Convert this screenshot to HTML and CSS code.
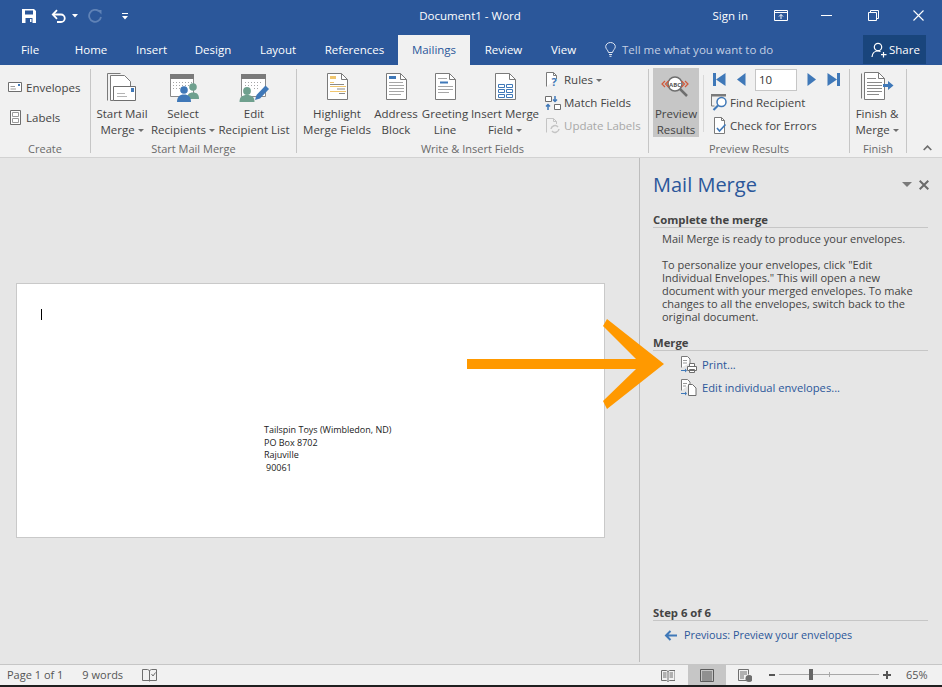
FILE: index.html
```html
<!DOCTYPE html>
<html lang="en">
<head>
<meta charset="utf-8">
<title>Document1 - Word</title>
<link rel="stylesheet" href="styles.css">
</head>
<body>
<div class="app">
  <header class="titlebar">
    <div class="qat">
      <svg class="q-save" width="16" height="16" viewBox="0 0 16 16"><path fill="#fff" d="M1 1h12l2 2v12H1z"/><path fill="#2b579a" d="M4 2.500h8v4H4zM4.500 10h7v5h-7z"/><path fill="#fff" d="M9 11h1.500v3H9z"/></svg>
      <svg class="q-undo" width="16" height="15" viewBox="0 0 16 15"><path fill="none" stroke="#fff" stroke-width="1.800" d="M2 5.500h8a3.600 3.600 0 0 1 0 7.500H6"/><path fill="none" stroke="#fff" stroke-width="1.800" d="M6 1.200 1.800 5.500 6 9.800"/></svg>
      <svg class="q-caret" width="6" height="4" viewBox="0 0 6 4"><path fill="#fff" d="M0 0h6L3 3.500z"/></svg>
      <svg class="q-redo" width="15" height="15" viewBox="0 0 15 15"><path fill="none" stroke="#5f82b6" stroke-width="1.800" d="M11 2.200A6 6 0 1 0 13 8"/><path fill="#5f82b6" d="M9 1h4.500v4.500z"/></svg>
      <svg class="q-custom" width="6" height="7" viewBox="0 0 6 7"><path fill="#fff" d="M0 0h6v1H0zM0 3h6L3 6.500z"/></svg>
    </div>
    <div class="doc-title">Document1 - Word</div>
    <div class="win">
      <span class="signin">Sign in</span>
      <svg class="w-ribbon" width="14" height="11" viewBox="0 0 14 11"><path fill="none" stroke="#fff" d="M.5.500h13v10H.5zM.5 2.500h13M7 9V4.500M5 6.500l2-2 2 2"/></svg>
      <svg class="w-min" width="11" height="1" viewBox="0 0 11 1"><path fill="#fff" d="M0 0h11v1H0z"/></svg>
      <svg class="w-res" width="11" height="11" viewBox="0 0 11 11"><path fill="none" stroke="#fff" d="M.5 2.500h8v8h-8zM2.500 2.500v-2h8v8h-2"/></svg>
      <svg class="w-close" width="11" height="11" viewBox="0 0 11 11"><path fill="none" stroke="#fff" stroke-width="1.100" d="M.5.500l10 10M10.500.500l-10 10"/></svg>
    </div>
  </header>

  <nav class="tabs">
    <span class="tab">File</span>
    <span class="tab">Home</span>
    <span class="tab">Insert</span>
    <span class="tab">Design</span>
    <span class="tab">Layout</span>
    <span class="tab">References</span>
    <span class="tab tab-on">Mailings</span>
    <span class="tab">Review</span>
    <span class="tab">View</span>
    <div class="tellme">
      <svg width="11" height="15" viewBox="0 0 11 15"><path fill="none" stroke="#dfe6f2" d="M3.500 10.500C3 8 .7 7 .7 4.700a4.800 4.200 0 0 1 9.600 0C10.300 7 8 8 7.500 10.500zM4 12.500h3M4.500 14.300h2"/></svg>
      <span>Tell me what you want to do</span>
    </div>
    <div class="share">
      <svg width="16" height="16" viewBox="0 0 16 16"><circle cx="7" cy="5" r="3.700" fill="none" stroke="#fff" stroke-width="1.200"/><path fill="none" stroke="#fff" stroke-width="1.200" d="M1 15c.3-3.500 2.500-6 6-6 1 0 1.800.2 2.500.6M12.500 10v5.500M10 12.700h5.500"/></svg>
      <span>Share</span>
    </div>
  </nav>

  <section class="ribbon">
    <div class="group g-create">
      <div class="g-body">
        <div class="col col-create">
          <div class="sm"><svg width="14" height="11" viewBox="0 0 14 11"><path fill="#fff" stroke="#6e6e6e" d="M.5.500h13v9H.5z"/><path fill="#3f78b8" d="M10 2h2v2h-2z"/><path fill="#9a9a9a" d="M2.500 4H7v1H2.500zM2.500 6.500H8v1H2.500z"/></svg><span>Envelopes</span></div>
          <div class="sm"><svg width="14" height="15" viewBox="0 0 14 15"><path fill="#fff" stroke="#6e6e6e" d="M2.500.5h10v14h-10z"/><path fill="none" stroke="#9a9a9a" d="M4.500 2.500h6v4h-6zM4.500 8.500h6v4h-6z"/></svg><span>Labels</span></div>
        </div>
      </div>
      <div class="g-label">Create</div>
    </div>
    <div class="sep"></div>

    <div class="group g-start">
      <div class="g-body">
        <div class="lg w56">
          <svg width="32" height="32" viewBox="0 0 32 32"><path fill="none" stroke="#7a7a7a" d="M1.500 28.500V1.500h13"/><path fill="#fff" stroke="#7a7a7a" d="M4.500 28.500V3.500h14l6 6v6M4.500 28.500h3"/><path fill="#fff" stroke="#6e6e6e" d="M7.500 14.500h22v14h-22z"/><path fill="#3f78b8" d="M25 16h3v4h-3z"/><path fill="#b4b4b4" d="M11 21h8v1h-8zM11 24h10v1H11z"/></svg>
          <span>Start Mail</span><span>Merge<i class="dd"></i></span>
        </div>
        <div class="lg w66">
          <svg width="32" height="32" viewBox="0 0 32 32"><path fill="#fff" stroke="#8a8a8a" d="M3.500 2.500h23v22h-23z"/><path fill="#7a7a7a" d="M3 2h24v5H3z"/><path fill="#a6a6a6" d="M6 10h1v1H6zm3 0h1v1H9zm3 0h1v1h-1zm3 0h1v1h-1zm3 0h1v1h-1zm3 0h1v1h-1zm3 0h1v1h-1zM6 13h1v1H6zm3 0h1v1H9zm3 0h1v1h-1zm3 0h1v1h-1zm3 0h1v1h-1zm3 0h1v1h-1zM6 16h1v1H6zm3 0h1v1H9zm3 0h1v1h-1z"/><circle cx="26" cy="15" r="3.800" fill="#6fa08e"/><path fill="#6fa08e" d="M20 27c0-4.500 2-6.500 6-6.500s6 2 6 6.500z"/><circle cx="17" cy="18" r="3.800" fill="#3f78b8"/><path fill="#3f78b8" d="M10 30c0-5 2.500-7.500 7-7.500s7 2.500 7 7.500z"/></svg>
          <span>Select</span><span>Recipients<i class="dd"></i></span>
        </div>
        <div class="lg w76">
          <svg width="32" height="32" viewBox="0 0 32 32"><path fill="#fff" stroke="#8a8a8a" d="M3.500 2.500h24v22h-24z"/><path fill="#7a7a7a" d="M3 2h25v5H3z"/><path fill="#a6a6a6" d="M7 10h1v1H7zm3 0h1v1h-1zm3 0h1v1h-1zm3 0h1v1h-1zm3 0h1v1h-1zm3 0h1v1h-1zM7 13h1v1H7zm3 0h1v1h-1zm3 0h1v1h-1zm3 0h1v1h-1zm3 0h1v1h-1zM16 16h1v1h-1zm3 0h1v1h-1z"/><circle cx="9" cy="19" r="3.900" fill="#6fa08e"/><path fill="#6fa08e" d="M1.500 30c0-5 2.500-7 7.500-7s7.500 2 7.500 7z"/><path fill="#3f78b8" d="M17 28l1.500-5 9-9.500 3.500 3.500-9 9.500z"/></svg>
          <span>Edit</span><span>Recipient List</span>
        </div>
      </div>
      <div class="g-label">Start Mail Merge</div>
    </div>
    <div class="sep"></div>

    <div class="group g-write">
      <div class="g-body">
        <div class="lg w68">
          <svg width="32" height="32" viewBox="0 0 32 32"><path fill="#fff" stroke="#7a7a7a" d="M6.500 1.500h14l6 6v20h-20z"/><path fill="none" stroke="#7a7a7a" d="M20.500 1.500v6h6"/><path fill="#f0c66f" d="M9 4h6v3H9zM9 10h4v1H9zM9 14h16v1H9zM9 19h16v1H9z"/><path fill="#8a8a8a" d="M9 12h14v1H9zM16 16.500h8v1h-8zM18 21h6v1h-6z"/></svg>
          <span>Highlight</span><span>Merge Fields</span>
        </div>
        <div class="lg w50">
          <svg width="32" height="32" viewBox="0 0 32 32"><path fill="#fff" stroke="#7a7a7a" d="M6.500 1.500h14l6 6v20h-20z"/><path fill="none" stroke="#7a7a7a" d="M20.500 1.500v6h6"/><path fill="#3f78b8" d="M9 4h7v3H9z"/><path fill="#a6a6a6" d="M9 10h14v1H9zM9 13h15v1H9zM9 16h15v1H9zM9 19h15v1H9zM9 22h12v1H9z"/></svg>
          <span>Address</span><span>Block</span>
        </div>
        <div class="lg w48">
          <svg width="32" height="32" viewBox="0 0 32 32"><path fill="#fff" stroke="#7a7a7a" d="M6.500 1.500h14l6 6v20h-20z"/><path fill="none" stroke="#7a7a7a" d="M20.500 1.500v6h6"/><path fill="#a6a6a6" d="M9 6h9v1H9zM9 14h15v1H9zM9 17h15v1H9zM9 20h11v1H9z"/><path fill="#3f78b8" d="M11 9.500h8v2h-8z"/></svg>
          <span>Greeting</span><span>Line</span>
        </div>
        <div class="lg w72">
          <svg width="32" height="32" viewBox="0 0 32 32"><path fill="#fff" stroke="#7a7a7a" d="M6.500 1.500h14l6 6v20h-20z"/><path fill="none" stroke="#7a7a7a" d="M20.500 1.500v6h6"/><path fill="none" stroke="#3f78b8" d="M9.500 12.500h6v3h-6zM17.500 12.500h6v3h-6zM9.500 17.500h6v3h-6zM17.500 17.500h6v3h-6zM9.500 22.500h6v3h-6zM17.500 22.500h6v3h-6z"/></svg>
          <span>Insert Merge</span><span>Field<i class="dd"></i></span>
        </div>
        <div class="col col-rules">
          <div class="sm"><svg width="16" height="16" viewBox="0 0 16 16"><path fill="#fff" stroke="#7a7a7a" d="M1.500 14.500V.5h7l3 3V7"/><path fill="none" stroke="#7a7a7a" d="M8.500.5v3h3"/><text x="6.500" y="14" class="qm">?</text></svg><span>Rules<i class="dd"></i></span></div>
          <div class="sm"><svg width="16" height="16" viewBox="0 0 16 16"><path fill="#fff" stroke="#6e6e6e" d="M.5 1.500h6v5h-6zM9.500 9.500h6v5h-6z"/><path fill="none" stroke="#3f78b8" stroke-width="1.500" d="M10 1v5M8 4.500l2 2 2-2M3 15V10M1 11.500l2-2 2 2"/></svg><span>Match Fields</span></div>
          <div class="sm sm-off"><svg width="16" height="16" viewBox="0 0 16 16"><path fill="none" stroke="#c4c4c4" d="M1.500 14.500V.5h7l3 3V6M8.500.5v3h3"/><path fill="none" stroke="#c4c4c4" stroke-width="1.500" d="M6 11a4 4 0 0 1 7-2M14 11a4 4 0 0 1-7 2"/></svg><span>Update Labels</span></div>
        </div>
      </div>
      <div class="g-label">Write &amp; Insert Fields</div>
    </div>
    <div class="sep"></div>

    <div class="group g-preview">
      <div class="g-body">
        <div class="lg lg-on">
          <svg width="34" height="32" viewBox="0 0 34 32"><circle cx="16" cy="12" r="7" fill="#fff" stroke="#6e6e6e" stroke-width="1.600"/><path stroke="#6e6e6e" stroke-width="2.500" d="M21 17l7 7"/><text x="16" y="14.500" class="abc">ABC</text><path fill="none" stroke="#d2583a" stroke-width="1.200" d="M6 9l-3 3 3 3M9.500 9l-3 3 3 3M22.500 9l3 3-3 3M26 9l3 3-3 3"/></svg>
          <span>Preview</span><span>Results</span>
        </div>
        <div class="vsep"></div>
        <div class="col col-nav">
          <div class="nav">
            <svg class="n1" width="13" height="13" viewBox="0 0 13 13"><path fill="#3f78b8" d="M0 0h3v13H0zM3 6.500 12.500 0v13z"/></svg>
            <svg class="n2" width="9" height="13" viewBox="0 0 9 13"><path fill="#3f78b8" d="M8.500 0v13L0 6.500z"/></svg>
            <div class="num">10</div>
            <svg class="n3" width="9" height="13" viewBox="0 0 9 13"><path fill="#3f78b8" d="M.5 0v13L9 6.500z"/></svg>
            <svg class="n4" width="13" height="13" viewBox="0 0 13 13"><path fill="#3f78b8" d="M13 0h-3v13h3zM10 6.500.5 0v13z"/></svg>
          </div>
          <div class="sm"><svg width="17" height="17" viewBox="0 0 17 17"><path fill="#7a7a7a" d="M0 0h15v2.500H0z"/><path fill="none" stroke="#7a7a7a" d="M.5 2v10h3"/><circle cx="10.500" cy="8" r="4.500" fill="#fff" stroke="#3f78b8" stroke-width="1.500"/><path stroke="#3f78b8" stroke-width="2.200" d="M7 11.500l-4.500 4.500"/></svg><span>Find Recipient</span></div>
          <div class="sm"><svg width="17" height="17" viewBox="0 0 17 17"><path fill="#fff" stroke="#7a7a7a" d="M3.500 16.500V.5h7l3 3v13z"/><path fill="none" stroke="#7a7a7a" d="M10.500.5v3h3"/><path fill="none" stroke="#3f78b8" stroke-width="1.600" d="M6 11l2.500 3 6-6.500"/></svg><span>Check for Errors</span></div>
        </div>
      </div>
      <div class="g-label">Preview Results</div>
    </div>
    <div class="sep"></div>

    <div class="group g-finish">
      <div class="g-body">
        <div class="lg w54">
          <svg width="34" height="32" viewBox="0 0 34 32"><path fill="none" stroke="#7a7a7a" d="M1.500 26.500V1.500"/><path fill="#fff" stroke="#7a7a7a" d="M4.500 27.500V.5h14l6 6v21z"/><path fill="none" stroke="#7a7a7a" d="M18.500.5v6h6"/><path fill="#8a8a8a" d="M7 6h9v1H7zM7 10h15v1H7zM7 13h15v1H7zM7 16h15v1H7zM7 19h15v1H7zM7 22h12v1H7z"/><path fill="#3f78b8" d="M23 12h5V9l5.500 4.500L28 18v-3h-5z"/></svg>
          <span>Finish &amp;</span><span>Merge<i class="dd"></i></span>
        </div>
      </div>
      <div class="g-label">Finish</div>
    </div>
    <div class="sep"></div>
    <div class="collapse"><svg width="9" height="6" viewBox="0 0 9 6"><path fill="none" stroke="#6e6e6e" stroke-width="1.700" d="M.7 5 4.500 1.200 8.300 5"/></svg></div>
  </section>

  <main class="workspace">
    <div class="doc-area">
      <div class="page">
        <div class="caret"></div>
        <div class="addr">
          <div>Tailspin Toys (Wimbledon, ND)</div>
          <div>PO Box 8702</div>
          <div>Rajuville</div>
          <div class="zip">90061</div>
        </div>
      </div>
    </div>
    <aside class="pane">
      <div class="pane-top">
        <h1>Mail Merge</h1>
        <svg class="p-drop" width="10" height="5" viewBox="0 0 10 5"><path fill="#7a7a7a" d="M0 0h10L5 5z"/></svg>
        <svg class="p-x" width="10" height="10" viewBox="0 0 10 10"><path stroke="#6a6a6a" stroke-width="2" d="M.7.7l8.600 8.600M9.300.7.700 9.300"/></svg>
      </div>
      <h2 class="h-complete">Complete the merge</h2>
      <p class="p1">Mail Merge is ready to produce your envelopes.</p>
      <p class="p2">To personalize your envelopes, click "Edit Individual Envelopes." This will open a new document with your merged envelopes. To make changes to all the envelopes, switch back to the original document.</p>
      <h2 class="h-merge">Merge</h2>
      <div class="act">
        <svg width="17" height="17" viewBox="0 0 17 17"><path fill="#fff" stroke="#7a7a7a" d="M1.500 11.500V.5h6l2.500 2.500v4"/><path fill="#9a9a9a" d="M3 4h4v1H3zM3 6.500h4v1H3z"/><path fill="#fff" stroke="#6e6e6e" d="M7.500 10.500h9v4h-9zM9.500 7.500h5v3h-5zM9.500 13.500h5v3h-5z"/><path fill="#3f78b8" d="M1 14h4v-1.500l2 2-2 2V15H1z"/></svg>
        <span>Print...</span>
      </div>
      <div class="act">
        <svg width="17" height="17" viewBox="0 0 17 17"><path fill="#fff" stroke="#7a7a7a" d="M1.500 11.500V.5h6l2.500 2.500v2"/><path fill="#9a9a9a" d="M3 4h4v1H3zM3 6.500h3v1H3z"/><path fill="#fff" stroke="#6e6e6e" d="M8.500 5.500h4l3.500 3.500v7.500H8.500z"/><path fill="#3f78b8" d="M1 14h4v-1.500l2 2-2 2V15H1z"/></svg>
        <span>Edit individual envelopes...</span>
      </div>
      <div class="pane-foot">
        <h2 class="h-step">Step 6 of 6</h2>
        <div class="prev">
          <svg width="13" height="11" viewBox="0 0 13 11"><path fill="none" stroke="#3f78b8" stroke-width="2" d="M13 5.500H2M6.500 1 2 5.500 6.500 10"/></svg>
          <span>Previous: Preview your envelopes</span>
        </div>
      </div>
    </aside>
    <svg class="arrow" width="197" height="90" viewBox="0 0 197 90"><path fill="#ff9900" d="M140 0 197 45 140 90 136 82 169 50H0V40H169L136 7z"/></svg>
  </main>

  <footer class="status">
    <span class="st-page">Page 1 of 1</span>
    <span class="st-words">9 words</span>
    <svg class="st-book" width="15" height="14" viewBox="0 0 15 14"><path fill="none" stroke="#6e6e6e" d="M7.500 12.500h-7v-11h5l2 1 2-1h5v11h-7zM7.500 2.500v11"/><path fill="none" stroke="#6e6e6e" d="M9.500 6l1.500 2 2.500-3.500"/></svg>
    <div class="views">
      <svg width="14" height="13" viewBox="0 0 14 13"><path fill="none" stroke="#6e6e6e" d="M.5 1.500h5l1.500 1 1.500-1h5.500v10H8.500l-1.500 1-1.500-1h-5zM7 2.500v9M2 4h3.500M2 6h3.500M2 8h3.500M8.500 4H12M8.500 6H12M8.500 8H12"/></svg>
      <div class="view-on"><svg width="14" height="13" viewBox="0 0 14 13"><path fill="none" stroke="#5a5a5a" d="M.5.500h13v12H.5zM2 3h10M2 5h10M2 7h10M2 9h10M2 11h10"/></svg></div>
      <svg width="14" height="13" viewBox="0 0 14 13"><path fill="none" stroke="#6e6e6e" d="M8 11.500H.5V.5h10v5M2 3h7M2 5h7M2 7h4M2 9h4"/><circle cx="11" cy="9.500" r="3.500" fill="#6e6e6e"/></svg>
    </div>
    <div class="zoom">
      <span class="z-minus"></span>
      <div class="z-track"><span class="z-tick"></span><span class="z-thumb"></span></div>
      <span class="z-plus"></span>
      <span class="z-val">65%</span>
    </div>
  </footer>
  <div class="taskbar"></div>
</div>
</body>
</html>
```

FILE: styles.css
```css
* { box-sizing: border-box; }
html, body { margin: 0; padding: 0; }
body { font-family: "Open Sans", "Noto Sans", "Liberation Sans", sans-serif; font-size: 11.5px; color: #444; background: #e6e6e6; }
.app { width: 942px; height: 687px; display: flex; flex-direction: column; overflow: hidden; }
svg { display: block; flex: none; }

.titlebar { height: 35px; background: #2b579a; color: #fff; display: flex; align-items: center; position: relative; flex: none; }
.qat { display: flex; align-items: center; padding: 0 0 3px 21px; }
.q-undo { margin-left: 14px; }
.q-caret { margin-left: 5px; }
.q-redo { margin-left: 10px; }
.q-custom { margin-left: 19px; }
.doc-title { position: absolute; left: 0; width: 940px; text-align: center; top: 7px; line-height: 17px; }
.win { margin-left: auto; display: flex; align-items: center; padding: 0 18px 4px 0; }
.signin { line-height: 17px; margin-right: -2px; }
.w-ribbon { margin-left: 28px; }
.w-min { margin-left: 33px; }
.w-res { margin-left: 36px; }
.w-close { margin-left: 34px; }

.tabs { height: 30px; background: #2b579a; color: #fff; display: grid; grid-template-columns: 60px 62px 59px 64px 66px 87px 72px 67px 53px 1fr auto; flex: none; }
.tab { display: flex; align-items: center; justify-content: center; padding-bottom: 1px; }
.tab-on { background: #f1f1f1; color: #2b579a; }
.tellme { display: flex; align-items: center; padding: 0 0 1px 15px; gap: 6px; color: #c3cfe3; white-space: nowrap; }
.share { width: 63px; height: 29px; margin-right: 16px; background: #19457c; display: flex; align-items: center; gap: 2px; padding-left: 8px; }

.ribbon { height: 93px; background: #f1f1f1; border-bottom: 1px solid #d2d2d2; display: flex; flex: none; }
.group { display: flex; flex-direction: column; }
.g-body { flex: 1; display: flex; min-height: 0; }
.g-label { height: 15px; line-height: 14px; text-align: center; color: #6a6a6a; font-size: 11px; }
.sep { width: 1px; margin: 4px 0; background: #c6c6c6; flex: none; }
.g-create { width: 90px; }
.g-start { width: 205px; }
.g-start .g-body { padding-left: 3px; }
.g-write { width: 351px; }
.g-write .g-body { padding-left: 6px; }
.g-preview { width: 200px; }
.g-preview .g-body { padding: 3px 0 0 4px; }
.g-finish { width: 56px; }
.collapse { flex: 1; display: flex; align-items: flex-end; padding: 0 0 6px 16px; }

.lg { display: flex; flex-direction: column; align-items: center; padding-top: 7px; line-height: 16px; white-space: nowrap; flex: none; }
.lg svg { margin-bottom: 2px; }
.w56 { width: 56px; }
.w66 { width: 66px; }
.w76 { width: 76px; }
.w68 { width: 68px; }
.w50 { width: 50px; }
.w48 { width: 48px; }
.w72 { width: 72px; }
.w54 { width: 54px; }
.lg-on { width: 46px; height: 69px; background: #c6c6c6; padding-top: 4px; }
.vsep { width: 1px; height: 57px; margin: 7px 7px 0 4px; background: #d8d8d8; flex: none; }
.dd { display: inline-block; width: 0; height: 0; margin: 0 0 2px 3px; border: 3px solid transparent; border-top-color: #6e6e6e; border-bottom: 0; }

.col { display: flex; flex-direction: column; }
.sm { display: flex; align-items: center; white-space: nowrap; }
.sm-off { color: #a8a8a8; }
.col-create { padding: 7px 0 0 8px; }
.col-create .sm { height: 30px; gap: 4px; }
.col-rules { padding: 3px 0 0 4px; }
.col-rules .sm { height: 23px; gap: 3px; }
.col-nav .sm { height: 23px; gap: 2px; }
.qm { font: bold 11px "Open Sans", sans-serif; fill: #3f78b8; }
.abc { font: bold 6px "Open Sans", sans-serif; fill: #555; text-anchor: middle; }

.nav { display: flex; align-items: center; height: 23px; padding-left: 2px; }
.n2 { margin-left: 11px; }
.num { width: 42px; height: 22px; margin-left: 9px; background: #fff; border: 1px solid #c6c6c6; padding-left: 3px; line-height: 20px; color: #333; }
.n3 { margin-left: 10px; }
.n4 { margin-left: 11px; }

.workspace { flex: 1; display: flex; position: relative; min-height: 0; background: #e6e6e6; }
.doc-area { width: 639px; padding: 125px 0 0 16px; flex: none; }
.page { width: 589px; height: 255px; background: #fff; border: 1px solid #c9c9c9; color: #222; padding: 25px 0 0 24px; }
.caret { width: 1px; height: 11px; background: #000; }
.addr { margin: 104px 0 0 223px; font-size: 9px; line-height: 12.600px; white-space: nowrap; }
.zip { padding-left: 2px; }

.pane { flex: 1; border-left: 1px solid #bdbdbd; margin-bottom: 2px; display: flex; flex-direction: column; padding: 0 14px 0 13px; color: #444; font-size: 11px; }
.pane-top { display: flex; align-items: center; height: 27px; margin-top: 13px; }
.pane-top h1 { margin: 0; font-size: 20px; font-weight: 400; color: #2b579a; line-height: 27px; }
.p-drop { margin-left: auto; margin-right: 7px; }
.p-x { margin-right: -1px; }
h2 { margin: 0; font-size: 11.300px; font-weight: 700; color: #444; line-height: 14px; border-bottom: 1px solid #c6c6c6; }
.h-complete { margin-top: 15px; }
p { margin: 0; padding: 0 14px 0 9px; line-height: 13px; }
.p1 { margin-top: 4px; }
.p2 { margin-top: 13px; }
.h-merge { margin-top: 13px; }
.act { display: flex; align-items: center; height: 23px; padding-left: 27px; gap: 5px; color: #2b579a; font-size: 11.200px; }
.h-merge + .act { margin-top: 2px; }
.pane-foot { margin-top: auto; padding-bottom: 19px; }
.prev { display: flex; align-items: center; gap: 7px; padding: 6px 0 0 11px; color: #2b579a; line-height: 16px; font-size: 10.800px; }
.arrow { position: absolute; left: 467px; top: 161px; }

.status { height: 21px; background: #f1f1f1; border-top: 1px solid #c6c6c6; display: flex; align-items: center; padding-bottom: 1px; color: #555; font-size: 11px; flex: none; }
.st-page { margin-left: 7px; }
.st-words { margin-left: 19px; }
.st-book { margin-left: 19px; }
.views { margin-left: auto; display: flex; align-items: center; height: 20px; margin-bottom: -1px; }
.view-on { width: 38px; height: 20px; margin: 0 12px 0 13px; background: #c6c6c6; display: flex; align-items: center; justify-content: center; }
.zoom { display: flex; align-items: center; margin-left: 17px; width: 173px; }
.z-minus { width: 6px; height: 2px; background: #555; }
.z-track { width: 100px; height: 1px; margin: 0 4px; background: #a8a8a8; position: relative; }
.z-thumb { position: absolute; left: 30px; top: -5px; width: 4px; height: 11px; background: #666; }
.z-tick { position: absolute; left: 50px; top: -2px; width: 1px; height: 5px; background: #a8a8a8; }
.z-plus { width: 8px; height: 8px; background: linear-gradient(#555, #555) center / 8px 2px no-repeat, linear-gradient(#555, #555) center / 2px 8px no-repeat; }
.z-val { margin-left: 15px; }
.taskbar { height: 2px; background: #1f1f1f; flex: none; }
```
